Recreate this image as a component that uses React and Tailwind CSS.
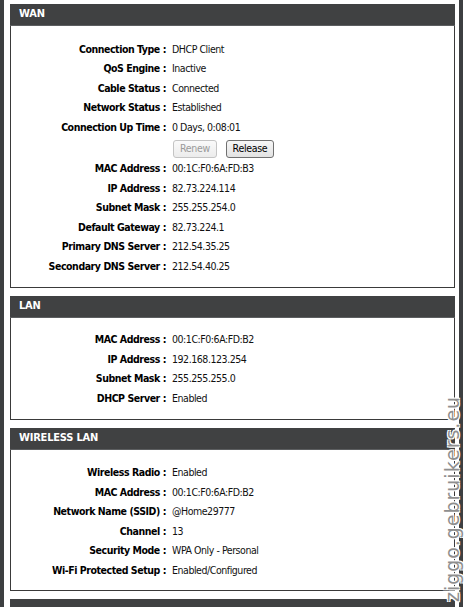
import React from "react";

const font = { fontFamily: '"DejaVu Sans Condensed", "DejaVu Sans", sans-serif' };

function Row({ label, value, h = "h-[19.5px]" }) {
  return (
    <div className={`flex items-center ${h}`}>
      <div className="w-[155px] text-right font-bold text-black whitespace-nowrap">{label}&nbsp;:</div>
      <div className="pl-[6px] text-[#111] whitespace-nowrap">{value}</div>
    </div>
  );
}

function Panel({ title, children, pt, pb }) {
  return (
    <div>
      <div className="h-[22px] bg-[#404142] border-b border-[#5c5e60] flex items-center pl-[9px] text-white font-bold text-[11px] tracking-[-0.2px]">
        {title}
      </div>
      <div className={`bg-white border-x border-b border-[#3a3a3a] ${pt} ${pb}`}>{children}</div>
    </div>
  );
}

export default function App() {
  return (
    <div className="relative w-[465px] h-[607px] bg-white overflow-hidden flex text-[10.5px] tracking-[-0.45px]" style={font}>
      <div className="w-[4px] bg-[#3d3f41]" />
      <div className="w-[6px] bg-white" />
      <div className="w-[445px] pt-[4px] flex flex-col gap-[8px]">
        <Panel title="WAN" pt="pt-[14px]" pb="pb-[10px]">
          <Row label="Connection Type" value="DHCP Client" />
          <Row label="QoS Engine" value="Inactive" />
          <Row label="Cable Status" value="Connected" />
          <Row label="Network Status" value="Established" />
          <Row label="Connection Up Time" value="0 Days, 0:08:01" />
          <div className="flex items-center h-[22px] pl-[162px] gap-[9px]">
            <button className="h-[18px] w-[44px] rounded-[3px] border border-[#c4c4c4] bg-gradient-to-b from-[#fafafa] to-[#ececec] text-[#9a9a9a] text-[10.5px] tracking-[-0.3px]" style={font}>
              Renew
            </button>
            <button className="h-[18px] w-[48px] rounded-[3px] border border-[#707070] bg-gradient-to-b from-[#f7f7f7] to-[#e2e2e2] text-black text-[10.5px] tracking-[-0.3px]" style={font}>
              Release
            </button>
          </div>
          <Row label="MAC Address" value="00:1C:F0:6A:FD:B3" />
          <Row label="IP Address" value="82.73.224.114" />
          <Row label="Subnet Mask" value="255.255.254.0" />
          <Row label="Default Gateway" value="82.73.224.1" />
          <Row label="Primary DNS Server" value="212.54.35.25" />
          <Row label="Secondary DNS Server" value="212.54.40.25" />
        </Panel>
        <Panel title="LAN" pt="pt-[13px]" pb="pb-[10px]">
          <Row label="MAC Address" value="00:1C:F0:6A:FD:B2" />
          <Row label="IP Address" value="192.168.123.254" />
          <Row label="Subnet Mask" value="255.255.255.0" />
          <Row label="DHCP Server" value="Enabled" />
        </Panel>
        <Panel title="WIRELESS LAN" pt="pt-[14px]" pb="pb-[9px]">
          <Row label="Wireless Radio" value="Enabled" />
          <Row label="MAC Address" value="00:1C:F0:6A:FD:B2" />
          <Row label="Network Name (SSID)" value="@Home29777" />
          <Row label="Channel" value="13" />
          <Row label="Security Mode" value="WPA Only - Personal" />
          <Row label="Wi-Fi Protected Setup" value="Enabled/Configured" />
        </Panel>
        <div className="h-[22px] bg-[#404142]" />
      </div>
      <div className="w-[4px] bg-white" />
      <div className="w-[4px] bg-[#3d3f41]" />
      <div className="w-[2px] bg-white" />
      <div
        className="absolute left-[443px] top-[602px] origin-top-left -rotate-90 whitespace-nowrap text-[19px] leading-[19px] tracking-[1px] text-[#8f8f8f]"
        style={{ fontFamily: '"DejaVu Sans", sans-serif', textShadow: "1px 1px 0 #fff, -1px -1px 0 #fff, 1px -1px 0 #fff, -1px 1px 0 #fff" }}
      >
        ziggo.gebruikers.eu
      </div>
    </div>
  );
}
